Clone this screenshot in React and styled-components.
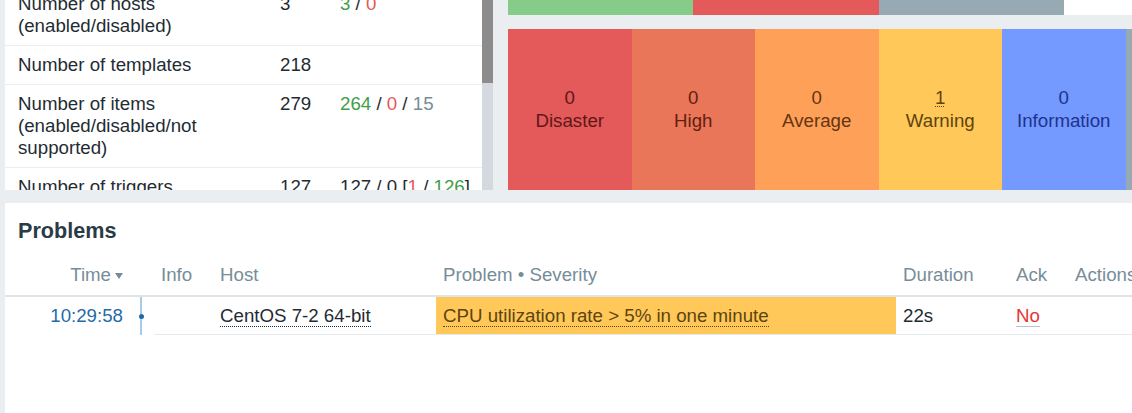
import React from "react";
import styled, { createGlobalStyle } from "styled-components";

const GlobalStyle = createGlobalStyle`
  html, body {
    margin: 0;
    padding: 0;
    background: #ebeef0;
    overflow: hidden;
  }
  body {
    font-family: "Liberation Sans", Arial, sans-serif;
    font-size: 18.7px;
    line-height: 22px;
    color: #1f2c33;
  }
`;

// built lazily: the coloured spans are declared further down
const getStats = () => [
  {
    label: "Number of hosts (enabled/disabled)",
    value: "3",
    details: (
      <>
        <Green>3</Green> / <Red>0</Red>
      </>
    ),
  },
  { label: "Number of templates", value: "218", details: null },
  {
    label: "Number of items (enabled/disabled/not supported)",
    value: "279",
    details: (
      <>
        <Green>264</Green> / <Red>0</Red> / <Grey>15</Grey>
      </>
    ),
  },
  {
    label: "Number of triggers (enabled/disabled [problem/ok])",
    value: "127",
    details: (
      <>
        127 / 0 [<Red>1</Red> / <Green>126</Green>]
      </>
    ),
  },
  {
    label: "Number of users (online)",
    value: "2",
    details: <Green>1</Green>,
  },
];

const availability = [
  { name: "Available", color: "#86cc89" },
  { name: "Not available", color: "#e45959" },
  { name: "Unknown", color: "#97aab3" },
  { name: "Total", color: "#ffffff" },
];

const severities = [
  { name: "Disaster", count: 0, bg: "#e45959", fg: "#5e1718" },
  { name: "High", count: 0, bg: "#e97659", fg: "#62200f" },
  { name: "Average", count: 0, bg: "#ffa059", fg: "#643510" },
  { name: "Warning", count: 1, bg: "#ffc859", fg: "#5c4410" },
  { name: "Information", count: 0, bg: "#7499ff", fg: "#1b3390" },
  { name: "Not classified", count: 0, bg: "#97aab3", fg: "#2c3a41" },
];

export default function App() {
  const stats = getStats();
  return (
    <>
      <GlobalStyle />
      <Page>
        <TopRow>
          <SystemWidget>
            <SystemBody>
              <StatsList>
                {stats.map((s) => (
                  <StatRow key={s.label}>
                    <StatLabel>{s.label}</StatLabel>
                    <StatCell>{s.value}</StatCell>
                    <StatCell>{s.details}</StatCell>
                  </StatRow>
                ))}
              </StatsList>
            </SystemBody>
            <ScrollTrack>
              <ScrollThumb />
            </ScrollTrack>
          </SystemWidget>

          <RightColumn>
            <AvailabilityBar>
              {availability.map((a) => (
                <AvailabilityCell key={a.name} $bg={a.color} />
              ))}
            </AvailabilityBar>
            <SeverityBar>
              {severities.map((s) => (
                <SeverityCell key={s.name} $bg={s.bg} $fg={s.fg}>
                  <SeverityCount $link={s.count > 0}>{s.count}</SeverityCount>
                  <span>{s.name}</span>
                </SeverityCell>
              ))}
            </SeverityBar>
          </RightColumn>
        </TopRow>

        <ProblemsWidget>
          <WidgetTitle>Problems</WidgetTitle>
          <ProblemsTable>
            <colgroup>
              <col style={{ width: 123 }} />
              <col style={{ width: 26 }} />
              <col style={{ width: 59 }} />
              <col style={{ width: 223 }} />
              <col style={{ width: 460 }} />
              <col style={{ width: 113 }} />
              <col style={{ width: 59 }} />
              <col />
            </colgroup>
            <thead>
              <tr>
                <Th $right>
                  Time<SortArrow />
                </Th>
                <Th />
                <Th>Info</Th>
                <Th>Host</Th>
                <Th>Problem • Severity</Th>
                <Th>Duration</Th>
                <Th>Ack</Th>
                <Th>Actions</Th>
              </tr>
            </thead>
            <tbody>
              <tr>
                <TimeCell>10:29:58</TimeCell>
                <TimelineCell>
                  <TimelineDot />
                </TimelineCell>
                <Td />
                <Td>
                  <Dotted>CentOS 7-2 64-bit</Dotted>
                </Td>
                <Td $bg="#ffc859">
                  <Dotted $color="#5c4410">
                    CPU utilization rate &gt; 5% in one minute
                  </Dotted>
                </Td>
                <Td>22s</Td>
                <Td>
                  <AckLink>No</AckLink>
                </Td>
                <Td />
              </tr>
            </tbody>
          </ProblemsTable>
        </ProblemsWidget>
      </Page>
    </>
  );
}

const Page = styled.div`
  width: 1244px;
  padding-left: 5px;
  display: flex;
  flex-direction: column;
  gap: 13px;
`;

const TopRow = styled.div`
  display: grid;
  grid-template-columns: 488px 741px;
  column-gap: 15px;
  height: 190px;
`;

const SystemWidget = styled.div`
  display: flex;
  background: #ffffff;
  overflow: hidden;
`;

const SystemBody = styled.div`
  flex: 1;
  overflow: hidden;
`;

/* list is scrolled down by 15px */
const StatsList = styled.div`
  margin-top: -15px;
`;

const StatRow = styled.div`
  display: grid;
  grid-template-columns: 267px 60px 1fr;
  border-bottom: 1px solid #ebeef0;
`;

const StatCell = styled.div`
  padding: 8px;
  white-space: nowrap;
`;

const StatLabel = styled.div`
  padding: 8px 8px 8px 13px;
`;

const Green = styled.span`
  color: #429e47;
`;

const Red = styled.span`
  color: #e45959;
`;

const Grey = styled.span`
  color: #768d99;
`;

const ScrollTrack = styled.div`
  width: 11px;
  background: #d3d9de;
`;

const ScrollThumb = styled.div`
  height: 83px;
  background: #8c8c8c;
`;

const RightColumn = styled.div`
  display: flex;
  flex-direction: column;
  gap: 14px;
`;

const AvailabilityBar = styled.div`
  display: flex;
  height: 15px;
  background: #ffffff;
`;

const AvailabilityCell = styled.div`
  flex: 1;
  background: ${(p) => p.$bg};
`;

const SeverityBar = styled.div`
  display: flex;
  height: 161px;
`;

const SeverityCell = styled.div`
  flex: 1;
  display: flex;
  flex-direction: column;
  align-items: center;
  justify-content: center;
  padding-bottom: 2px;
  background: ${(p) => p.$bg};
  color: ${(p) => p.$fg};
  line-height: 23px;
`;

const SeverityCount = styled.span`
  text-decoration: ${(p) => (p.$link ? "underline dotted" : "none")};
  text-decoration-thickness: 1px;
  text-underline-offset: 2px;
`;

const ProblemsWidget = styled.div`
  background: #ffffff;
  height: 210px;
`;

const WidgetTitle = styled.h4`
  margin: 0;
  height: 51px;
  padding-top: 2px;
  display: flex;
  align-items: center;
  padding-left: 13px;
  font-size: 21.6px;
  font-weight: bold;
  color: #2b3b45;
`;

const ProblemsTable = styled.table`
  width: 100%;
  table-layout: fixed;
  border-collapse: collapse;
`;

const Th = styled.th`
  padding: 8px ${(p) => (p.$right ? "5px" : "7px")} 9px 7px;
  text-align: ${(p) => (p.$right ? "right" : "left")};
  font-weight: normal;
  color: #768d99;
  white-space: nowrap;
  border-bottom: 2px solid #dfe4e7;
`;

const SortArrow = styled.span`
  display: inline-block;
  margin-left: 4px;
  vertical-align: middle;
  border-left: 4.5px solid transparent;
  border-right: 4.5px solid transparent;
  border-top: 6px solid #768d99;
`;

const Td = styled.td`
  padding: 8px 7px 7px;
  white-space: nowrap;
  background: ${(p) => p.$bg || "transparent"};
  border-bottom: 1px solid #e6eaed;
`;

const TimeCell = styled.td`
  padding: 8px 5px 7px 7px;
  text-align: right;
  color: #1f6ba9;
`;

const TimelineCell = styled.td`
  padding: 0;
  text-align: center;
  background: linear-gradient(#a9cbe6, #a9cbe6) no-repeat center / 2px 100%;
`;

const TimelineDot = styled.span`
  display: inline-block;
  width: 5px;
  height: 5px;
  border-radius: 50%;
  background: #1f6ba9;
  vertical-align: middle;
`;

const Dotted = styled.span`
  color: ${(p) => p.$color || "#1f2c33"};
  border-bottom: 1px dotted currentColor;
`;

const AckLink = styled.span`
  color: #e33734;
  border-bottom: 1px solid #b3c6d6;
`;
